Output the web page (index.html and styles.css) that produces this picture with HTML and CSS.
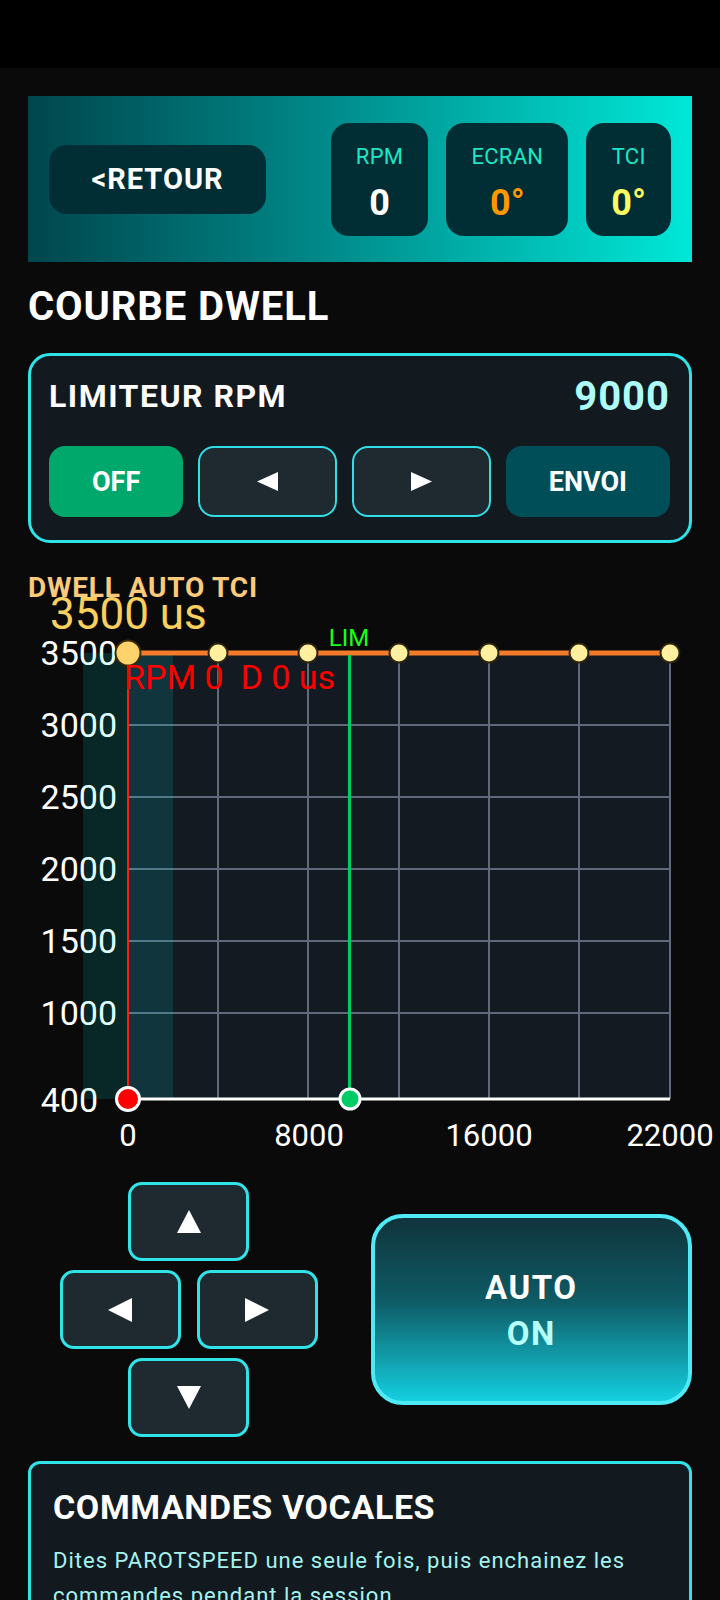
FILE: index.html
```html
<!DOCTYPE html>
<html lang="fr">
<head>
<meta charset="utf-8">
<title>Courbe Dwell</title>
<link rel="stylesheet" href="styles.css">
</head>
<body>
<div class="statusbar"></div>
<main class="page">
  <header class="banner">
    <button class="back-btn">&lt;RETOUR</button>
    <div class="stats">
      <div class="stat"><span class="stat-label">RPM</span><span class="stat-value v-white">0</span></div>
      <div class="stat"><span class="stat-label">ECRAN</span><span class="stat-value v-orange">0°</span></div>
      <div class="stat"><span class="stat-label">TCI</span><span class="stat-value v-yellow">0°</span></div>
    </div>
  </header>

  <h1 class="page-title">COURBE DWELL</h1>

  <section class="card limiter">
    <div class="limiter-head">
      <span class="limiter-title">LIMITEUR RPM</span>
      <span class="limiter-value">9000</span>
    </div>
    <div class="limiter-btns">
      <button class="lbtn lbtn-off">OFF</button>
      <button class="lbtn lbtn-arrow"><svg width="21" height="19" viewBox="0 0 21 19"><polygon points="21,0 21,19 0,9.5" fill="#fff"/></svg></button>
      <button class="lbtn lbtn-arrow"><svg width="21" height="19" viewBox="0 0 21 19"><polygon points="0,0 0,19 21,9.5" fill="#fff"/></svg></button>
      <button class="lbtn lbtn-send">ENVOI</button>
    </div>
  </section>

  <h2 class="chart-title">DWELL AUTO TCI</h2>
  <svg class="chart" width="664" height="547" viewBox="28 603 664 547">
    <text x="50" y="629" class="c-big">3500 us</text>
    <rect x="128" y="653" width="542" height="446" fill="#141a21"/>
    <g stroke="#5f6a7a" stroke-width="2">
      <line x1="218" y1="653" x2="218" y2="1099"/>
      <line x1="308" y1="653" x2="308" y2="1099"/>
      <line x1="399" y1="653" x2="399" y2="1099"/>
      <line x1="489" y1="653" x2="489" y2="1099"/>
      <line x1="579" y1="653" x2="579" y2="1099"/>
      <line x1="670" y1="653" x2="670" y2="1099"/>
      <line x1="128" y1="725" x2="670" y2="725"/>
      <line x1="128" y1="797" x2="670" y2="797"/>
      <line x1="128" y1="869" x2="670" y2="869"/>
      <line x1="128" y1="941" x2="670" y2="941"/>
      <line x1="128" y1="1013" x2="670" y2="1013"/>
    </g>
    <g class="c-ylab" text-anchor="end">
      <text x="117" y="665">3500</text>
      <text x="117" y="737">3000</text>
      <text x="117" y="809">2500</text>
      <text x="117" y="881">2000</text>
      <text x="117" y="953">1500</text>
      <text x="117" y="1025">1000</text>
      <text x="98" y="1112">400</text>
    </g>
    <g class="c-xlab" text-anchor="middle">
      <text x="128" y="1146">0</text>
      <text x="309" y="1146">8000</text>
      <text x="489" y="1146">16000</text>
      <text x="670" y="1146">22000</text>
    </g>
    <rect x="83" y="653" width="90" height="446" fill="rgba(0,255,255,0.12)"/>
    <line x1="128" y1="653" x2="670" y2="653" stroke="#f47b2a" stroke-width="5"/>
    <line x1="128" y1="655" x2="128" y2="1099" stroke="#ff1a1a" stroke-width="2"/>
    <line x1="349.5" y1="655" x2="349.5" y2="1099" stroke="#00cc66" stroke-width="3"/>
    <line x1="128" y1="1099" x2="670" y2="1099" stroke="#ffffff" stroke-width="3"/>
    <text x="349" y="646" class="c-lim" text-anchor="middle">LIM</text>
    <circle cx="128" cy="653" r="12.5" fill="#ffd36b" stroke="#3a2a08" stroke-width="2"/>
    <g fill="#fff0a0" stroke="#2e240e" stroke-width="2">
      <circle cx="218" cy="653" r="9.5"/>
      <circle cx="308" cy="653" r="9.5"/>
      <circle cx="399" cy="653" r="9.5"/>
      <circle cx="489" cy="653" r="9.5"/>
      <circle cx="579" cy="653" r="9.5"/>
      <circle cx="670" cy="653" r="9.5"/>
    </g>
    <text x="124" y="689" class="c-red">RPM 0&#160; D 0 us</text>
    <circle cx="128" cy="1099" r="11.5" fill="#ff0000" stroke="#ffffff" stroke-width="3"/>
    <circle cx="350" cy="1099" r="10" fill="#00cc66" stroke="#ffffff" stroke-width="3"/>
  </svg>

  <section class="controls">
    <div class="dpad">
      <div class="dpad-row">
        <button class="dbtn"><svg width="24" height="23" viewBox="0 0 24 23"><polygon points="12,0 24,23 0,23" fill="#fff"/></svg></button>
      </div>
      <div class="dpad-row">
        <button class="dbtn"><svg width="24" height="24" viewBox="0 0 24 24"><polygon points="24,0 24,24 0,12" fill="#fff"/></svg></button>
        <button class="dbtn"><svg width="24" height="24" viewBox="0 0 24 24"><polygon points="0,0 0,24 24,12" fill="#fff"/></svg></button>
      </div>
      <div class="dpad-row">
        <button class="dbtn"><svg width="24" height="23" viewBox="0 0 24 23"><polygon points="0,0 24,0 12,23" fill="#fff"/></svg></button>
      </div>
    </div>
    <button class="auto-btn">
      <span class="auto-l1">AUTO</span>
      <span class="auto-l2">ON</span>
    </button>
  </section>

  <section class="card voice">
    <h3 class="voice-title">COMMANDES VOCALES</h3>
    <p class="voice-text">Dites PAROTSPEED une seule fois, puis enchainez les commandes pendant la session.</p>
  </section>
</main>
</body>
</html>
```
FILE: styles.css
```css
* { box-sizing: border-box; }
html, body { margin: 0; padding: 0; }
body {
  background: #0a0a0a;
  color: #fff;
  font-family: Roboto, "Liberation Sans", sans-serif;
  width: 720px;
  overflow: hidden;
}
button {
  font-family: inherit;
  border: none;
  color: #fff;
  padding: 0;
  cursor: pointer;
}
.statusbar {
  height: 68px;
  background: #000;
}
.page {
  padding: 0 28px 40px 28px;
}

/* banner */
.banner {
  margin-top: 28px;
  height: 166px;
  background: linear-gradient(90deg, #00464d 0%, #008a8a 45%, #00e8d8 100%);
  display: flex;
  align-items: center;
  justify-content: space-between;
  padding: 0 21px;
}
.back-btn {
  width: 217px;
  height: 69px;
  border-radius: 18px;
  background: #002e34;
  font-size: 29px;
  font-weight: 700;
  letter-spacing: 1px;
}
.stats {
  display: flex;
  gap: 18px;
}
.stat {
  height: 113px;
  background: #002e34;
  border-radius: 18px;
  padding: 21px 25px 12px;
  display: flex;
  flex-direction: column;
  align-items: center;
  gap: 12px;
}
.stat-label {
  font-size: 22px;
  line-height: 26px;
  color: #1ee6c6;
  letter-spacing: 0.3px;
}
.stat-value {
  font-size: 36px;
  line-height: 42px;
  font-weight: 700;
}
.v-white { color: #fff; }
.v-orange { color: #ff9800; }
.v-yellow { color: #fcfc60; }

/* title */
.page-title {
  margin: 22px 0 0;
  font-size: 40px;
  line-height: 46px;
  font-weight: 700;
  letter-spacing: 0.9px;
}

/* cards */
.card {
  background: #121a20;
  border: 3px solid #30e3e8;
}
.limiter {
  margin-top: 23px;
  border-radius: 22px;
  padding: 16px 19px 23px 18px;
}
.limiter-head {
  display: flex;
  justify-content: space-between;
  align-items: center;
  height: 48px;
}
.limiter-title {
  font-size: 32px;
  font-weight: 700;
  letter-spacing: 1.5px;
}
.limiter-value {
  font-size: 40px;
  font-weight: 700;
  color: #aefcf8;
  letter-spacing: 1px;
}
.limiter-btns {
  margin-top: 26px;
  display: grid;
  grid-template-columns: 134fr 139fr 138fr 164fr;
  gap: 15px;
}
.lbtn {
  height: 71px;
  border-radius: 16px;
  font-size: 27px;
  font-weight: 700;
  display: flex;
  align-items: center;
  justify-content: center;
}
.lbtn-off { background: #00a86b; }
.lbtn-arrow { background: #1e2a30; border: 2px solid #30e0e8; }
.lbtn-send { background: #004f58; }

/* chart */
.chart-title {
  margin: 30px 0 0;
  font-size: 28px;
  line-height: 30px;
  font-weight: 700;
  color: #fcca7c;
  letter-spacing: 0.8px;
}
.chart {
  display: block;
  overflow: visible;
}
.c-big { font-size: 44px; fill: #f9cf5d; font-family: Roboto, sans-serif; }
.c-ylab text { font-size: 34px; fill: #fff; font-family: Roboto, sans-serif; }
.c-xlab text { font-size: 31px; fill: #fff; font-family: Roboto, sans-serif; }
.c-lim { font-size: 24px; fill: #1aff1a; font-family: Roboto, sans-serif; }
.c-red { font-size: 34px; fill: #ff0000; font-family: Roboto, sans-serif; }

/* controls */
.controls {
  margin-top: 32px;
  display: grid;
  grid-template-columns: 1fr 1fr;
  gap: 21px;
  align-items: center;
}
.dpad {
  justify-self: center;
  display: flex;
  flex-direction: column;
  gap: 9px;
}
.dpad-row {
  display: flex;
  justify-content: center;
  gap: 16px;
}
.dbtn {
  width: 121px;
  height: 79px;
  border-radius: 14px;
  background: #1e2a30;
  border: 3px solid #30e3e8;
  display: flex;
  align-items: center;
  justify-content: center;
}
.auto-btn {
  height: 191px;
  border-radius: 32px;
  border: 4px solid #4eeaf5;
  background: linear-gradient(180deg, #10343c 0%, #0e5a64 45%, #14cfe0 100%);
  display: flex;
  flex-direction: column;
  align-items: center;
  justify-content: center;
  font-size: 33px;
  line-height: 46px;
  font-weight: 700;
  letter-spacing: 1.5px;
  padding-top: 3px;
}
.auto-l1 { color: #fff; }
.auto-l2 { color: #b4fffa; }

/* voice card */
.voice {
  margin-top: 24px;
  border-radius: 12px;
  padding: 23px 20px 24px 22px;
}
.voice-title {
  margin: 0;
  font-size: 34px;
  line-height: 40px;
  font-weight: 700;
  letter-spacing: 0.6px;
}
.voice-text {
  margin: 16px 0 0;
  font-size: 22px;
  line-height: 35px;
  color: #a6f2ee;
  letter-spacing: 1px;
}
```
